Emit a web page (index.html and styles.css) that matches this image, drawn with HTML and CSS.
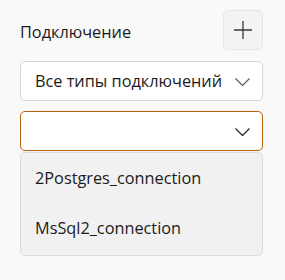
FILE: index.html
```html
<!DOCTYPE html>
<html lang="ru">
<head>
<meta charset="utf-8">
<link rel="stylesheet" href="styles.css">
</head>
<body>
<div class="panel">
  <div class="header">
    <span class="label">Подключение</span>
    <button class="add-btn" aria-label="Добавить">
      <svg width="20" height="20" viewBox="0 0 20 20"><path d="M10 1v18M1 10h18" stroke="#3a3a3a" stroke-width="1.3" fill="none"/></svg>
    </button>
  </div>
  <div class="select">
    <span class="select-text">Все типы подключений</span>
    <svg class="chev" width="15" height="8" viewBox="0 0 15 8"><path d="M0.5 0.5l7 7 7-7" stroke="#555" stroke-width="1.1" fill="none"/></svg>
  </div>
  <div class="select select-open">
    <span class="select-text"></span>
    <svg class="chev" width="15" height="8" viewBox="0 0 15 8"><path d="M0.5 0.5l7 7 7-7" stroke="#222" stroke-width="1.2" fill="none"/></svg>
  </div>
  <ul class="list">
    <li class="item">2Postgres_connection</li>
    <li class="item">MsSql2_connection</li>
  </ul>
</div>
</body>
</html>
```
FILE: styles.css
```css
html, body {
  margin: 0;
  padding: 0;
  background: #f9f9f9;
}
body {
  font-family: "Open Sans", "Noto Sans", sans-serif;
  color: #1b1b1b;
}
.panel {
  width: 243px;
  padding: 10px 0 0 20px;
  display: flex;
  flex-direction: column;
}
.header {
  display: flex;
  align-items: center;
  justify-content: space-between;
  height: 40px;
}
.label {
  font-size: 16.3px;
  padding-top: 3px;
}
.add-btn {
  width: 40px;
  height: 40px;
  box-sizing: border-box;
  border: 1px solid #e6e6e6;
  border-radius: 5px;
  background: #f3f3f3;
  display: flex;
  align-items: center;
  justify-content: center;
  padding: 0;
  margin-right: 0;
}
.select {
  box-sizing: border-box;
  height: 40px;
  margin-top: 11px;
  background: #fff;
  border: 1px solid #d6d6d6;
  border-radius: 5px;
  display: flex;
  align-items: center;
  justify-content: space-between;
  padding: 0 12px 0 14px;
}
.select-open {
  margin-top: 10px;
  border-color: #b5600f;
}
.select-text {
  font-size: 16.3px;
}
.chev {
  display: block;
  margin-top: 1px;
}
.list {
  list-style: none;
  margin: 1px 0 0 0;
  padding: 0 0 2px 0;
  box-sizing: border-box;
  height: 104px;
  background: #f1f1f1;
  border: 1px solid #dadada;
  border-radius: 5px;
}
.item {
  height: 50px;
  display: flex;
  align-items: center;
  padding-left: 14px;
  font-size: 16.3px;
}
```
